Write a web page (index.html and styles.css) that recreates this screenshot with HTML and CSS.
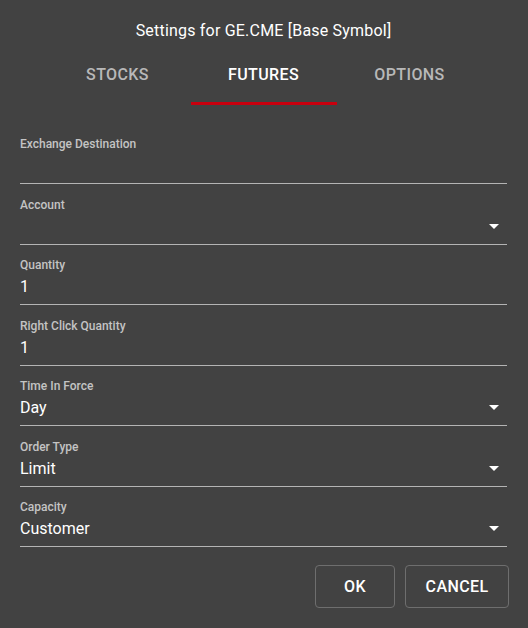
FILE: index.html
```html
<!DOCTYPE html>
<html>
<head>
    <title>Symbol Settings</title>
    <link rel="stylesheet" href="styles.css">
</head>
<body>
    <div class="dialog">
        <h2 class="dialog-title">Settings for GE.CME [Base Symbol]</h2>

        <div class="tabs">
            <div class="tab">Stocks</div>
            <div class="tab active">Futures</div>
            <div class="tab">Options</div>
        </div>

        <form class="fields">
            <div class="field">
                <label class="field-label">Exchange Destination</label>
                <div class="field-value"></div>
            </div>
            <div class="field select">
                <label class="field-label">Account</label>
                <div class="field-value"></div>
            </div>
            <div class="field">
                <label class="field-label">Quantity</label>
                <div class="field-value">1</div>
            </div>
            <div class="field">
                <label class="field-label">Right Click Quantity</label>
                <div class="field-value">1</div>
            </div>
            <div class="field select">
                <label class="field-label">Time In Force</label>
                <div class="field-value">Day</div>
            </div>
            <div class="field select">
                <label class="field-label">Order Type</label>
                <div class="field-value">Limit</div>
            </div>
            <div class="field select">
                <label class="field-label">Capacity</label>
                <div class="field-value">Customer</div>
            </div>
        </form>

        <div class="actions">
            <button class="btn">OK</button>
            <button class="btn">Cancel</button>
        </div>
    </div>
</body>
</html>
```

FILE: styles.css
```css
html, body {
    margin: 0;
    height: 100%;
    background-color: #424242;
}

body {
    font-family: Roboto, "Liberation Sans", sans-serif;
    color: #ffffff;
}

.dialog {
    width: 528px;
    height: 628px;
    box-sizing: border-box;
    background-color: #424242;
    padding: 20px 21px 0 20px;
}

.dialog-title {
    margin: 0;
    font-size: 16px;
    font-weight: 400;
    line-height: 22px;
    letter-spacing: 0.2px;
    text-align: center;
}

.tabs {
    display: flex;
    justify-content: center;
    margin-top: 6px;
}

.tab {
    width: 146px;
    padding: 16px 0 16px;
    border-bottom: 3px solid transparent;
    font-size: 16px;
    font-weight: 500;
    line-height: 22px;
    letter-spacing: 0.4px;
    text-align: center;
    text-transform: uppercase;
    color: #b8b8b8;
}

.tab.active {
    color: #ffffff;
    border-bottom-color: #c8000e;
}

.fields {
    margin-top: 30px;
}

.field {
    position: relative;
    border-bottom: 1px solid #b4b4b4;
    padding-top: 1px;
    padding-bottom: 5px;
    margin-bottom: 11.5px;
}

.field-label {
    display: block;
    font-size: 12px;
    font-weight: 500;
    line-height: 16px;
    color: #c4c4c4;
}

.field-value {
    margin-top: 2px;
    height: 24px;
    font-size: 16px;
    line-height: 24px;
}

.field.select::after {
    content: "";
    position: absolute;
    right: 8px;
    top: 28px;
    border-left: 5px solid transparent;
    border-right: 5px solid transparent;
    border-top: 5px solid #ffffff;
}

.actions {
    display: flex;
    justify-content: flex-end;
    gap: 10px;
    margin-top: 18px;
    margin-right: -2px;
}

.btn {
    height: 43px;
    min-width: 80px;
    padding: 0 19.5px;
    background: transparent;
    border: 1px solid #6e6e6e;
    border-radius: 4px;
    font-family: Roboto, "Liberation Sans", sans-serif;
    font-size: 16px;
    font-weight: 500;
    letter-spacing: 0.4px;
    color: #ffffff;
    text-transform: uppercase;
}
```
